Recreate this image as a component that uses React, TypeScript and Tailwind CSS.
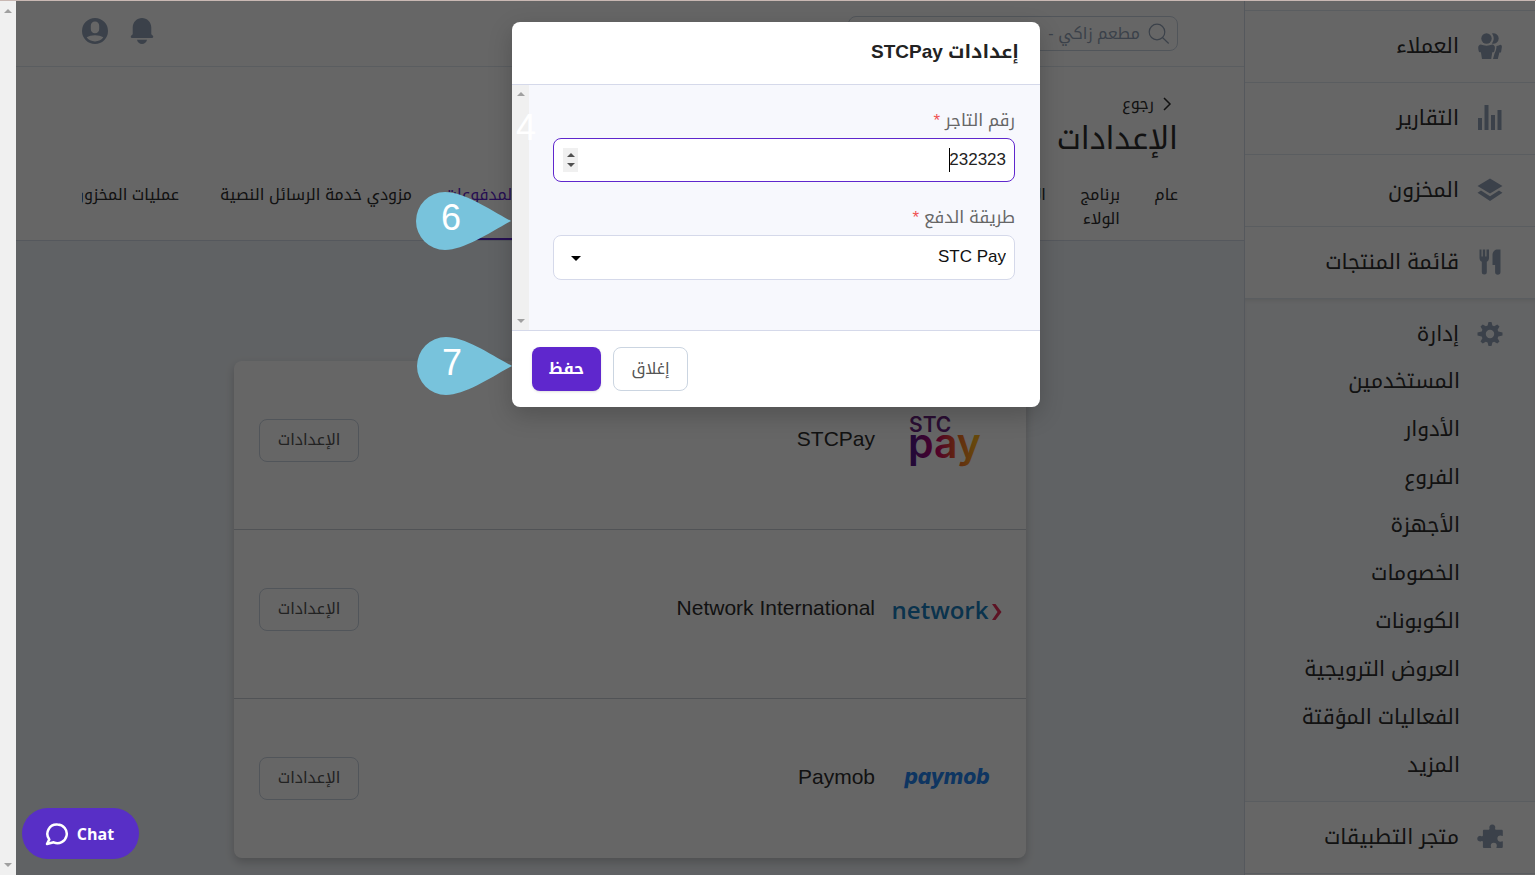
import type { ReactNode } from "react";

const ICON = "size-[26px] shrink-0 fill-[#94a3b8]";

const UsersIcon = () => (
  <svg viewBox="0 0 26 26" className={ICON} aria-hidden="true">
    <circle cx="9.500" cy="5.500" r="5.200" />
    <path d="M1.200 14.500c0-1.700 1.200-2.800 2.600-3 3.500 1.500 8 1.500 11.500 0 1.400.2 2.600 1.300 2.600 3 0 1.500-.4 4.500-1.400 4.800h-1.200L14.200 26H5l-1.100-6.700H2.600c-1-.3-1.400-3.300-1.400-4.800z" />
    <path d="M14.800.6a5.200 5.200 0 1 1 0 9.800c2.500-2.700 2.500-7.100 0-9.800z" />
    <path d="M19.500 13c1.500 0 3-.9 4-1.200 1 .3 1.500 1.200 1.400 2.200l-.9 5.500h-1.600L20.800 26H16l1.500-5.500c1.300-2 2-5 2-7.500z" />
  </svg>
);

const ChartIcon = () => (
  <svg viewBox="0 0 26 26" className={ICON} aria-hidden="true">
    <path d="M1 13h4v12H1zM7.500 0h4v25h-4zM14 10h4v15h-4zM20.500 5h4v20h-4z" />
  </svg>
);

const LayersIcon = () => (
  <svg viewBox="0 0 26 26" className={ICON} aria-hidden="true">
    <path d="M13 1.500 25.500 9 13 16.500.5 9z" />
    <path d="M4 13.500.5 15.800 13 24l12.500-8.200-3.500-2.300-9 5.700z" />
  </svg>
);

const MenuIcon = () => (
  <svg viewBox="0 0 26 26" className={ICON} aria-hidden="true">
    <path d="M2.500.5h2v7h1.300v-7h2.400v7h1.300v-7H12V9c0 2-1 3.200-2.200 3.800V23a2.500 2.500 0 0 1-5 0V12.800C3.500 12.200 2.500 11 2.500 9z" />
    <path d="M23.500.5V23a2.700 2.700 0 0 1-5.400 0v-7h-2.600V6c0-3.500 2.500-5.500 5-5.500z" />
  </svg>
);

const GearIcon = () => (
  <svg viewBox="0 0 26 26" className={ICON} aria-hidden="true">
    <path
      fillRule="evenodd"
      d="M11.500 1h3l.9 3.600 1.700.7 3.200-1.900 2.200 2.200-1.900 3.200.7 1.700 4.200.9v3.200l-4.200.9-.7 1.700 1.900 3.200-2.200 2.200-3.200-1.900-1.700.7-.9 3.600h-3l-.9-3.600-1.700-.7-3.200 1.900-2.200-2.200 1.900-3.200-.7-1.700-4.200-.9v-3.200l4.200-.9.7-1.700L3.500 5.600l2.200-2.200 3.200 1.900 1.700-.7zM13 8.800a4.200 4.200 0 1 0 0 8.400 4.200 4.200 0 0 0 0-8.400z"
    />
  </svg>
);

const PuzzleIcon = () => (
  <svg viewBox="0 0 26 26" className={ICON} aria-hidden="true">
    <path d="M12.500 4.500a3 3 0 1 1 5.600 0c0 .8.400 1.300 1.200 1.300h5.200c.8 0 1.300.5 1.300 1.300v4.600c-.6.500-1.300-.2-2.300-.2a3.100 3.100 0 0 0 0 6.200c1 0 1.700-.7 2.300-.2v5.200c0 .8-.5 1.300-1.300 1.300h-5c-.3-.6.300-1.200.3-2.200a3 3 0 0 0-6 0c0 1 .6 1.600.3 2.200H7.200c-.8 0-1.300-.5-1.300-1.300v-4.500c0-1-.8-1.400-1.600-1a2.800 2.800 0 1 1 0-5c.8.400 1.600 0 1.600-1V7.100c0-.8.5-1.300 1.300-1.300h4c.8 0 1.300-.5 1.300-1.300z" />
  </svg>
);

const topItems: { label: string; icon: ReactNode }[] = [
  { label: "العملاء", icon: <UsersIcon /> },
  { label: "التقارير", icon: <ChartIcon /> },
  { label: "المخزون", icon: <LayersIcon /> },
  { label: "قائمة المنتجات", icon: <MenuIcon /> },
];

const manageItems = [
  "المستخدمين",
  "الأدوار",
  "الفروع",
  "الأجهزة",
  "الخصومات",
  "الكوبونات",
  "العروض الترويجية",
  "الفعاليات المؤقتة",
  "المزيد",
];

function Sidebar() {
  return (
    <nav className="flex w-[291px] shrink-0 flex-col border-l border-[#d5dbe8] bg-white pt-[9px] text-[21px] text-[#2d2d2d]">
      {topItems.map((item) => (
        <a key={item.label} href="#" className="flex h-[72px] shrink-0 items-center gap-[18px] border-t border-[#e2e8f0] pr-8 pb-0.5">
          {item.icon}
          {item.label}
        </a>
      ))}
      <div className="flex shrink-0 flex-col border-y border-[#e2e8f0] bg-[#f8fafc] py-[11px] shadow-[inset_0_3px_5px_-2px_rgba(0,0,0,0.1)]">
        <a href="#" className="flex h-12 items-center gap-[18px] pr-8">
          <GearIcon />
          إدارة
        </a>
        {manageItems.map((label) => (
          <a key={label} href="#" className="flex h-12 items-center pr-[75px] pb-0.5">
            {label}
          </a>
        ))}
      </div>
      <a href="#" className="flex h-[72px] shrink-0 items-center gap-[18px] border-b border-[#e2e8f0] pr-8 pb-0.5">
        <PuzzleIcon />
        متجر التطبيقات
      </a>
    </nav>
  );
}

function TopBar() {
  return (
    <header className="flex h-[66px] shrink-0 items-center justify-between border-b border-[#e2e8f0] px-[66px]">
      <label className="flex h-[35px] w-[330px] items-center gap-2 rounded-lg border border-[#cbd5e1] px-[7px]">
        <svg viewBox="0 0 22 22" className="size-[22px] fill-none stroke-[#94a3b8] stroke-[1.2]" aria-hidden="true">
          <circle cx="9" cy="9" r="7.800" />
          <path d="m14.700 14.700 6 5.800" />
        </svg>
        <input
          aria-label="بحث"
          defaultValue="مطعم زاكي -"
          className="min-w-0 flex-1 bg-transparent text-base text-[#94a3b8] outline-none"
        />
      </label>
      <div className="flex items-center gap-5 pb-1.5">
        <button aria-label="التنبيهات">
          <svg viewBox="0 0 26 26" className={ICON} aria-hidden="true">
            <path d="M14 0c5 0 9.300 4 9.300 9.500v6.800l1.600 1.400c.8 1 .3 2.300-.9 2.300H4c-1.200 0-1.700-1.300-.9-2.300l1.600-1.400V9.500C4.700 4 9 0 14 0zM9 21.700h10c-.4 2.500-2.500 4.300-5 4.300s-4.600-1.800-5-4.300z" />
          </svg>
        </button>
        <button aria-label="الحساب">
          <svg viewBox="0 0 26 26" className={ICON} aria-hidden="true">
            <path
              fillRule="evenodd"
              d="M13 0a13 13 0 1 1 0 26 13 13 0 0 1 0-26zm0 3.500c-2.500 0-4.200 1.800-4.200 4.200v3.200c0 2.500 1.700 4.300 4.200 4.300s4.200-1.800 4.200-4.300V7.700c0-2.400-1.700-4.200-4.200-4.200zM4.700 19.300C9 16.500 17 16.500 21.300 19.300 18.500 24.800 7.500 24.800 4.700 19.300z"
            />
          </svg>
        </button>
      </div>
    </header>
  );
}

function PageHeader() {
  return (
    <section className="h-[174px] shrink-0 border-b border-[#d5dbe8] px-[66px] pt-[25px] text-[#2d2d2d]">
      <a href="#" className="flex h-6 items-center gap-2 pr-1.5">
        <svg viewBox="0 0 10 14" className="h-3.5 w-2.5 fill-none stroke-current stroke-[1.5]" aria-hidden="true">
          <path d="m2 1 6 6-6 6" />
        </svg>
        رجوع
      </a>
      <h1 className="h-[45px] text-[31px] leading-[46px]">الإعدادات</h1>
      <div className="mt-[22px] flex h-[57px] gap-[33px] overflow-hidden leading-6">
        <a href="#" className="w-[25px] shrink-0">عام</a>
        <a href="#" className="w-[41px] shrink-0">برنامج الولاء</a>
        <a href="#" className="w-[496px] shrink-0">الأجهزة</a>
        <a href="#" className="w-[72px] shrink-0 border-b-2 border-[#5f27cd] whitespace-nowrap text-[#5f27cd]">المدفوعات</a>
        <a href="#" className="w-[200px] shrink-0">مزودي خدمة الرسائل النصية</a>
        <a href="#" className="shrink-0">عمليات المخزون</a>
      </div>
    </section>
  );
}

const StcLogo = () => (
  <svg viewBox="0 0 112 72" className="h-[72px] w-28 shrink-0" role="img" aria-label="STC Pay" direction="ltr">
    <defs>
      <linearGradient id="stc" x1="20" x2="92" y1="0" y2="0" gradientUnits="userSpaceOnUse">
        <stop offset="0" stopColor="#4f1a8c" />
        <stop offset="0.35" stopColor="#c4006b" />
        <stop offset="0.6" stopColor="#f25a2a" />
        <stop offset="0.9" stopColor="#ffb51f" />
      </linearGradient>
    </defs>
    <text x="18" y="27" fontSize="21" fontWeight="600" fontFamily="Inter, sans-serif" fill="#6a2480">STC</text>
    <text x="17" y="53" fontSize="41" fontWeight="600" fontFamily="Inter, sans-serif" fill="url(#stc)">pay</text>
  </svg>
);

const NetworkLogo = () => (
  <span dir="ltr" className="flex items-center gap-1 font-['Open_Sans',sans-serif] text-2xl font-semibold text-[#1a80c0]">
    network
    <svg viewBox="0 0 10 16" className="mt-1 h-4 w-2.5 fill-[#e8305a]" aria-hidden="true">
      <path d="M0 0h3.500l6 8-6 8H0l5.500-8z" />
    </svg>
  </span>
);

const PaymobLogo = () => (
  <span dir="ltr" className="pb-1 font-['Inter',sans-serif] text-[21px] leading-6 font-extrabold text-[#2585f2] italic">
    paymob
  </span>
);

const providers = [
  { name: "STCPay", logo: <StcLogo /> },
  { name: "Network International", logo: <NetworkLogo /> },
  { name: "Paymob", logo: <PaymobLogo /> },
];

function Providers() {
  return (
    <ul className="mx-auto mt-[120px] w-full max-w-[792px] shrink-0 divide-y divide-[#cbd0d6] rounded-lg bg-white shadow-[0_4px_10px_rgba(0,0,0,0.2)]">
      {providers.map((provider) => (
        <li key={provider.name} className="flex items-center pt-[58px] pr-[23px] pb-[67px] pl-[25px] last:pb-[58px]">
          <div className="flex h-[43px] w-28 items-center justify-center">{provider.logo}</div>
          <span className="mr-4 pb-1 text-[21px] text-[#2d2d2d]">{provider.name}</span>
          <button className="mr-auto h-[43px] w-[100px] rounded-lg border border-[#cbd5e1] pb-0.5 text-[#555]">الإعدادات</button>
        </li>
      ))}
    </ul>
  );
}

const Arrow = ({ up = false, className }: { up?: boolean; className: string }) => (
  <svg viewBox="0 0 8 4" className={className} aria-hidden="true">
    <path d={up ? "M0 4 4 0l4 4z" : "M0 0h8L4 4z"} />
  </svg>
);

function ScrollTrack({ className }: { className: string }) {
  return (
    <div className={`flex shrink-0 flex-col items-center justify-between bg-[#f0f0f0] ${className}`}>
      <Arrow up className="h-1 w-2 fill-[#a0a0a0]" />
      <Arrow className="h-1 w-2 fill-[#a0a0a0]" />
    </div>
  );
}

function SettingsDialog() {
  return (
    <form
      role="dialog"
      aria-labelledby="dialog-title"
      className="relative w-full max-w-[528px] overflow-hidden rounded-lg bg-white shadow-[0_8px_24px_rgba(0,0,0,0.2)]"
    >
      <h2 id="dialog-title" className="h-[62px] px-[21px] pt-[14px] text-[19px] leading-8 font-bold text-[#222]">
        إعدادات STCPay
      </h2>
      <div className="flex h-[247px] border-y border-[#d5d9ea] bg-[#f7f8fd] text-[17px]">
        <div className="flex-1 pt-[23px] pr-[25px] pl-6">
          <label htmlFor="merchant" className="block h-[30px] leading-[26px] text-[#666]">
            رقم التاجر <span className="text-[#f05252]">*</span>
          </label>
          <div className="relative flex h-11 items-center rounded-lg border border-[#5f27cd] bg-white pr-2 pl-[9px]">
            <input id="merchant" inputMode="numeric" defaultValue="232323" className="min-w-0 flex-1 bg-transparent text-[#222] outline-none" />
            <span className="absolute right-16 h-6 w-px bg-black" />
            <button type="button" aria-label="تغيير القيمة" className="flex h-6 w-[15px] flex-col items-center justify-center gap-1.5 bg-[#f0f0f0]">
              <Arrow up className="h-1 w-2 fill-[#505050]" />
              <Arrow className="h-1 w-2 fill-[#505050]" />
            </button>
          </div>
          <label htmlFor="method" className="mt-[23px] block h-[30px] leading-[26px] text-[#666]">
            طريقة الدفع <span className="text-[#f05252]">*</span>
          </label>
          <div className="relative">
            <select id="method" className="h-[45px] w-full appearance-none rounded-lg border border-[#d5d9ea] bg-white px-2 pb-0.5 text-[#111]">
              <option>STC Pay</option>
            </select>
            <Arrow className="pointer-events-none absolute top-[21px] left-[18px] h-[5px] w-2.5 fill-black" />
          </div>
        </div>
        <ScrollTrack className="w-[17px] py-[7px]" />
      </div>
      <div className="flex flex-row-reverse gap-3 px-5 py-4">
        <button type="button" className="h-11 w-[69px] rounded-lg bg-[#5f27cd] font-bold text-white shadow">حفظ</button>
        <button type="button" className="h-11 w-[75px] rounded-lg border border-[#cbd5e1] bg-white text-[#555]">إغلاق</button>
      </div>
    </form>
  );
}

const Pin = ({ label, className }: { label: string; className: string }) => (
  <div className={`absolute h-[60px] w-24 ${className}`} dir="ltr">
    <svg viewBox="0 0 96 60" className="size-full fill-[#78c3dc]" aria-hidden="true">
      <path d="M95 30C73 18 48 1 29 1a29 29 0 0 0 0 58C48 59 73 42 95 30z" />
    </svg>
    <span className="absolute top-1 left-[25px] text-4xl leading-[46px] text-white">{label}</span>
  </div>
);

export default function App() {
  return (
    <div
      dir="rtl"
      className="relative flex h-screen overflow-hidden border-t border-[#c9b8b3] bg-white font-['Liberation_Sans','Noto_Kufi_Arabic','Noto_Sans_Arabic',sans-serif] text-base"
    >
      <div className="relative mr-px flex min-w-0 flex-1 overflow-hidden">
        <Sidebar />
        <main className="flex min-w-0 flex-1 flex-col bg-[#f1f5f9]">
          <div className="flex shrink-0 flex-col bg-white">
            <TopBar />
            <PageHeader />
          </div>
          <Providers />
        </main>
        <div className="absolute inset-0 bg-black/60" />
      </div>
      <ScrollTrack className="w-4 py-2" />
      <div className="absolute inset-x-0 top-[21px] flex justify-center pl-4">
        <SettingsDialog />
      </div>
      <Pin label="6" className="top-[190px] left-[416px]" />
      <Pin label="7" className="top-[335px] left-[417px]" />
      <span className="absolute top-[104px] left-[516px] text-4xl leading-[46px] text-white">4</span>
      <button
        dir="ltr"
        className="absolute bottom-4 left-[22px] flex h-[51px] w-[117px] items-center justify-center gap-2 rounded-full bg-[#582fc6] pr-0.5 font-['Open_Sans',sans-serif] font-bold text-white"
      >
        <svg viewBox="0 0 24 24" className="size-6 fill-none stroke-white stroke-[2.5]" aria-hidden="true">
          <path d="M12.500 2.500a9.300 9.300 0 1 1-3.800 17.800L2 22l2.300-4.600A9.300 9.300 0 0 1 12.500 2.500z" strokeLinejoin="round" />
        </svg>
        Chat
      </button>
    </div>
  );
}
